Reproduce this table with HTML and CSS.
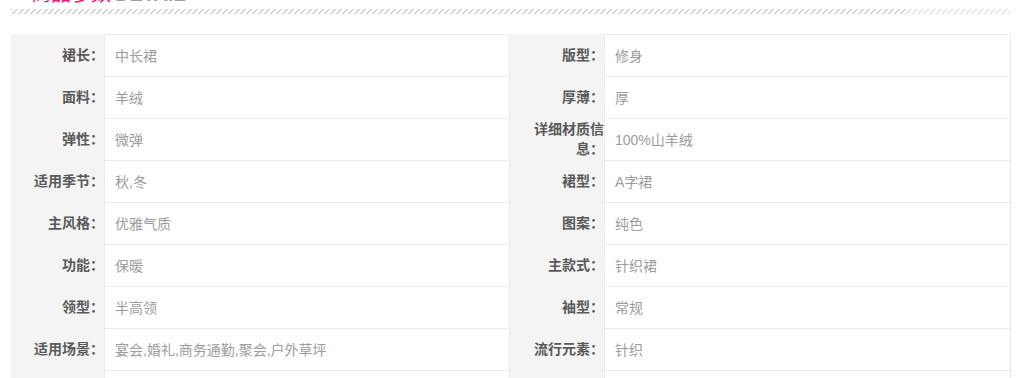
FILE: index.html
```html
<!DOCTYPE html>
<html lang="zh-CN">
<head>
<meta charset="utf-8">
<title>商品参数</title>
<link rel="stylesheet" href="styles.css">
</head>
<body>
<div class="wrap">
  <div class="title"><span class="cn">商品参数</span><span class="en">DETAIL</span></div>
  <div class="rule"></div>
  <div class="params">
    <div class="lbl">裙长：</div><div class="val">中长裙</div>
    <div class="lbl">版型：</div><div class="val">修身</div>

    <div class="lbl">面料：</div><div class="val">羊绒</div>
    <div class="lbl">厚薄：</div><div class="val">厚</div>

    <div class="lbl">弹性：</div><div class="val">微弹</div>
    <div class="lbl">详细材质信息：</div><div class="val">100%山羊绒</div>

    <div class="lbl">适用季节：</div><div class="val">秋,冬</div>
    <div class="lbl">裙型：</div><div class="val">A字裙</div>

    <div class="lbl">主风格：</div><div class="val">优雅气质</div>
    <div class="lbl">图案：</div><div class="val">纯色</div>

    <div class="lbl">功能：</div><div class="val">保暖</div>
    <div class="lbl">主款式：</div><div class="val">针织裙</div>

    <div class="lbl">领型：</div><div class="val">半高领</div>
    <div class="lbl">袖型：</div><div class="val">常规</div>

    <div class="lbl">适用场景：</div><div class="val">宴会,婚礼,商务通勤,聚会,户外草坪</div>
    <div class="lbl">流行元素：</div><div class="val">针织</div>

    <div class="lbl"></div><div class="val"></div>
    <div class="lbl"></div><div class="val"></div>
  </div>
</div>
</body>
</html>
```
FILE: styles.css
```css
html, body {
  margin: 0;
  padding: 0;
  background: #fff;
}

body {
  font-family: "Liberation Sans", "Noto Sans CJK SC", sans-serif;
  overflow: hidden;
}

.wrap {
  width: 1000px;
  margin-left: 11px;
}

.title {
  margin-top: -17px;
  height: 20px;
  line-height: 20px;
  font-size: 20px;
  padding-left: 20px;
  white-space: nowrap;
}

.title .cn {
  color: #f0137f;
  font-family: "Noto Sans CJK SC", sans-serif;
}

.title .en {
  color: #a0a0a0;
  margin-left: 4px;
  font-weight: bold;
}

.rule {
  margin-top: 6px;
  height: 5px;
  background: repeating-linear-gradient(135deg, #d0d0d0 0 1.1px, transparent 1.1px 4.24px);
}

.params {
  margin-top: 20px;
  display: grid;
  grid-template-columns: 93px 406px 94px 407px;
  grid-auto-rows: 42px;
  font-size: 14px;
  line-height: 20px;
}

.lbl {
  background: #f4f4f4;
  color: #5a5a5a;
  font-weight: bold;
  display: flex;
  align-items: center;
  justify-content: flex-end;
  text-align: right;
}

.val {
  border: 1px solid #ebebeb;
  border-bottom: none;
  color: #9c9c9c;
  padding-left: 10px;
  display: flex;
  align-items: center;
}
```
